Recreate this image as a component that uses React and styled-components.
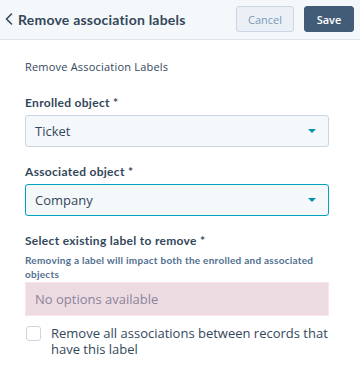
import React from "react";
import styled, { createGlobalStyle } from "styled-components";

const Global = createGlobalStyle`
  html, body { margin: 0; padding: 0; background: #ffffff; }
  body { font-family: "Open Sans", "Noto Sans", sans-serif; color: #33475b; }
  * { box-sizing: border-box; }
`;

const Page = styled.div`
  width: 360px;
  height: 366px;
  display: flex;
  flex-direction: column;
  background: #ffffff;
`;

const Header = styled.header`
  height: 40px;
  flex: none;
  display: flex;
  align-items: center;
  padding: 0 6px 1px 5px;
  background: #f5f8fa;
  border-bottom: 1px solid #dfe3eb;
`;

const BackButton = styled.button`
  display: flex;
  align-items: center;
  background: none;
  border: 0;
  padding: 0;
  margin-right: 5px;
  color: #33475b;
  cursor: pointer;
`;

const Title = styled.h1`
  margin: 0;
  flex: 1;
  font-family: "Lato", "Open Sans", sans-serif;
  font-size: 14px;
  font-weight: 700;
  letter-spacing: 0.22px;
  color: #33475b;
`;

const Button = styled.button`
  height: 26px;
  width: ${(p) => (p.$primary ? "50px" : "58px")};
  padding: 0;
  margin-left: ${(p) => (p.$primary ? "10px" : "0")};
  border-radius: 3px;
  font-family: inherit;
  font-size: 11px;
  border: 1px solid ${(p) => (p.$primary ? "#425b76" : "#cbd6e2")};
  background: ${(p) => (p.$primary ? "#425b76" : "#eaf0f6")};
  color: ${(p) => (p.$primary ? "#ffffff" : "#7c98b6")};
  font-weight: ${(p) => (p.$primary ? 600 : 400)};
`;

const Body = styled.main`
  padding: 20px 31px 0 25px;
  display: flex;
  flex-direction: column;
`;

const Intro = styled.p`
  margin: 0 0 21px;
  font-size: 11px;
  line-height: 14px;
  letter-spacing: 0.2px;
  color: #33475b;
`;

const Field = styled.div`
  display: flex;
  flex-direction: column;
  margin-bottom: ${(p) => p.$mb || "17px"};
`;

const Label = styled.label`
  font-family: "Lato", "Open Sans", sans-serif;
  font-size: 12px;
  font-weight: 700;
  line-height: 16px;
  letter-spacing: 0.3px;
  margin-bottom: 4px;
  color: #33475b;
`;

const Help = styled.div`
  font-family: "Lato", "Open Sans", sans-serif;
  font-size: 10px;
  font-weight: 700;
  line-height: 14px;
  letter-spacing: 0.26px;
  color: #516f90;
  margin: 0 0 1px;
`;

const Select = styled.div`
  height: 32px;
  display: flex;
  align-items: center;
  justify-content: space-between;
  padding: 0 12px 0 9px;
  border-radius: 3px;
  background: #f5f8fa;
  border: 1px solid ${(p) => (p.$focused ? "#00a4bd" : "#cbd6e2")};
  font-size: 13px;
  color: #33475b;
`;

const Caret = styled.span`
  width: 0;
  height: 0;
  border-left: 4px solid transparent;
  border-right: 4px solid transparent;
  border-top: 4px solid #0091ae;
`;

const Empty = styled.div`
  height: 34px;
  display: flex;
  align-items: center;
  padding: 0 9px;
  background: #eddbe2;
  border: 1px solid #fde3e6;
  font-size: 13px;
  color: #8b849a;
`;

const CheckRow = styled.label`
  display: flex;
  align-items: flex-start;
  gap: 10px;
  margin-top: 9px;
  padding-left: 1px;
`;

const Box = styled.span`
  flex: none;
  width: 15px;
  height: 15px;
  margin-top: 1px;
  border: 1px solid #cbd6e2;
  border-radius: 3px;
  background: #ffffff;
`;

const CheckText = styled.span`
  font-size: 13px;
  line-height: 16px;
  color: #33475b;
`;

export default function App() {
  return (
    <Page>
      <Global />
      <Header>
        <BackButton aria-label="Back">
          <svg width="8" height="12" viewBox="0 0 8 12" fill="none">
            <path d="M6.5 1 L1.5 6 L6.5 11" stroke="#33475b" strokeWidth="1.6" strokeLinecap="round" strokeLinejoin="round" />
          </svg>
        </BackButton>
        <Title>Remove association labels</Title>
        <Button>Cancel</Button>
        <Button $primary>Save</Button>
      </Header>
      <Body>
        <Intro>Remove Association Labels</Intro>
        <Field>
          <Label>Enrolled object *</Label>
          <Select>
            Ticket
            <Caret />
          </Select>
        </Field>
        <Field>
          <Label>Associated object *</Label>
          <Select $focused>
            Company
            <Caret />
          </Select>
        </Field>
        <Field $mb="0">
          <Label>Select existing label to remove *</Label>
          <Help>Removing a label will impact both the enrolled and associated objects</Help>
          <Empty>No options available</Empty>
        </Field>
        <CheckRow>
          <Box />
          <CheckText>Remove all associations between records that have this label</CheckText>
        </CheckRow>
      </Body>
    </Page>
  );
}
